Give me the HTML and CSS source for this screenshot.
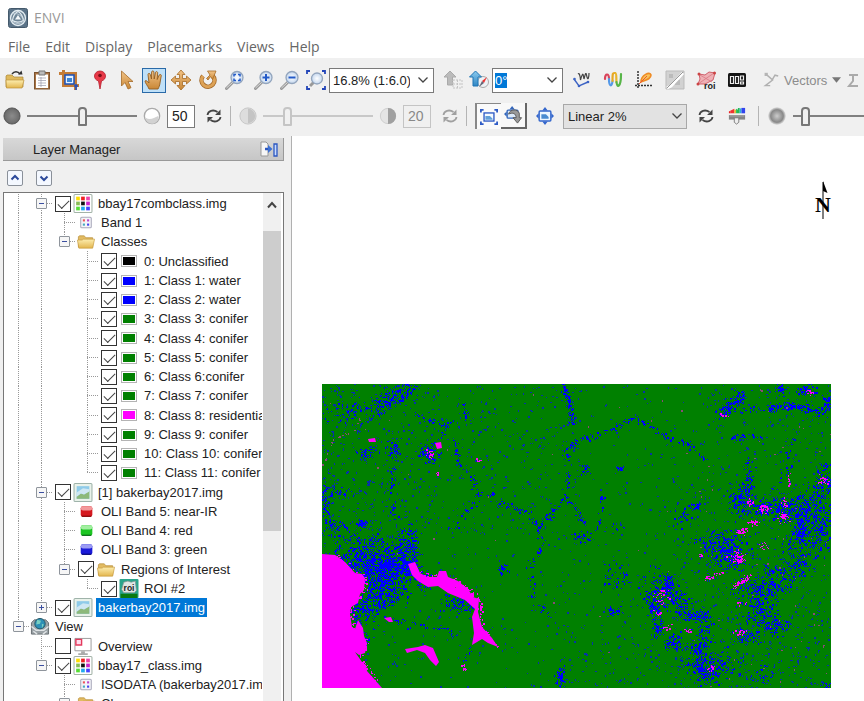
FILE: index.html
```html
<!DOCTYPE html>
<html lang="en">
<head>
  <meta charset="UTF-8" />
  <meta name="viewport" content="width=device-width, initial-scale=1.0"/>
  <title>ENVI</title>
  <link rel="stylesheet" href="styles.css">
</head>
<body>

<svg class="defs" aria-hidden="true">
  <defs>
    <linearGradient id="gold" x1="0" y1="0" x2="0" y2="1">
      <stop offset="0" stop-color="#fdeeb0"/><stop offset="1" stop-color="#e3b64e"/>
    </linearGradient>
    <linearGradient id="tan" x1="0" y1="0" x2="0" y2="1">
      <stop offset="0" stop-color="#f2c488"/><stop offset="1" stop-color="#c98736"/>
    </linearGradient>
    <linearGradient id="sky" x1="0" y1="0" x2="0" y2="1">
      <stop offset="0" stop-color="#8ccbee"/><stop offset="1" stop-color="#2f86c4"/>
    </linearGradient>
    <radialGradient id="glass"><stop offset="0" stop-color="#fff"/><stop offset="1" stop-color="#c3d6ee"/></radialGradient>
    <radialGradient id="ring"><stop offset="0" stop-color="#ccc"/><stop offset=".35" stop-color="#aaa"/><stop offset=".7" stop-color="#888"/><stop offset="1" stop-color="#e8e8e8"/></radialGradient>
    <radialGradient id="dark"><stop offset="0" stop-color="#8c8c8c"/><stop offset=".8" stop-color="#707070"/><stop offset="1" stop-color="#606060"/></radialGradient>
  </defs>
  <symbol id="folder" viewBox="0 0 20 20">
    <path d="M2 16V5l1-1h5l2 2h7v10z" fill="#e2bb62" stroke="#b48a34" stroke-width=".7"/>
    <path d="M1 8.500h5l1-1h12l-2 9.500H2.500z" fill="url(#gold)" stroke="#c59a3e" stroke-width=".7"/>
  </symbol>
  <symbol id="open" viewBox="0 0 20 20">
    <path d="M1 17V6l1-1h5l2 2h9v10z" fill="#dfb95c" stroke="#a98637" stroke-width=".7"/>
    <path d="M1 10h18l-2 8H1.500z" fill="url(#gold)" stroke="#bd943c" stroke-width=".7"/>
    <path d="M7 4c2-3 6-3 8 0" fill="none" stroke="#333" stroke-width="1.400"/><path d="M13 4.500h4.500l-1-4z" fill="#333"/>
  </symbol>
  <symbol id="classimg" viewBox="0 0 18 18">
    <rect x=".5" y=".5" width="17" height="17" rx="1" fill="#fff" stroke="#a3b3a8"/>
    <path d="M2.500 2.500h3.500v3.500H2.500z" fill="#fd0"/><path d="M7.200 2.500h3.500v3.500H7.200z" fill="#e22"/><path d="M12 2.500h3.500v3.500H12z" fill="#e4a"/>
    <path d="M2.500 7.200h3.500v3.500H2.500z" fill="#8b5"/><path d="M7.200 7.200h3.500v3.500H7.200z" fill="#111"/><path d="M12 7.200h3.500v3.500H12z" fill="#c2c"/>
    <path d="M2.500 12h3.500v3.500H2.500z" fill="#5d3"/><path d="M7.200 12h3.500v3.500H7.200z" fill="#2ae"/><path d="M12 12h3.500v3.500H12z" fill="#44f"/>
  </symbol>
  <symbol id="band" viewBox="0 0 18 18">
    <rect x="4" y="4" width="10" height="10" rx="1" fill="#f4f4fa" stroke="#aab"/>
    <path d="M6 6h2v2H6z" fill="#e55"/><path d="M10 6h2v2h-2z" fill="#b4c"/><path d="M6 10h2v2H6z" fill="#4ab"/><path d="M10 10h2v2h-2z" fill="#44e"/>
  </symbol>
  <symbol id="raster" viewBox="0 0 18 18">
    <rect x=".5" y=".5" width="17" height="17" rx="1" fill="#e9f2ea" stroke="#9fb3aa"/>
    <path d="M3 3h12v12H3z" fill="#8fcbe9"/><path d="M3 13l4-3 3 1 5-4v8H3z" fill="#8db97a"/><path d="M3 9l6-4 6 1v2l-5 3-3-1-4 3z" fill="#cfe7f3"/>
  </symbol>
  <symbol id="red" viewBox="0 0 18 18"><rect x="4" y="4" width="11" height="10" rx="2" fill="#d51a20"/><rect x="4" y="4" width="11" height="4" rx="2" fill="#f3999b"/><path d="M5 13.500h9" stroke="#700"/></symbol>
  <symbol id="green" viewBox="0 0 18 18"><rect x="4" y="4" width="11" height="10" rx="2" fill="#1cc522"/><rect x="4" y="4" width="11" height="4" rx="2" fill="#a2efa1"/><path d="M5 13.500h9" stroke="#051"/></symbol>
  <symbol id="blue" viewBox="0 0 18 18"><rect x="4" y="4" width="11" height="10" rx="2" fill="#1a1ad8"/><rect x="4" y="4" width="11" height="4" rx="2" fill="#9c9cf3"/><path d="M5 13.500h9" stroke="#006"/></symbol>
  <symbol id="roi" viewBox="0 0 18 18">
    <rect width="18" height="18" rx="1" fill="#2aa58b"/><path d="M1 14h16v4H1z" fill="#087a10"/>
    <path d="M4 3l4-1 3 1 4-1 1 9-2 2H4l-2-3z" fill="#dfe6e4" stroke="#7f9691" stroke-width=".7"/>
    <text x="9" y="11" text-anchor="middle" font-size="8" font-weight="bold" font-family="Liberation Sans, sans-serif" fill="#222">roi</text>
  </symbol>
  <symbol id="view" viewBox="0 0 20 20">
    <path d="M1 6l3-3h12l3 3v12H1z" fill="#9aa2a6" stroke="#666e72"/>
    <path d="M1 10l5 4h8l5-4M3 15l4 3M17 15l-4 3" stroke="#e0e4e6" stroke-width="1.500" fill="none"/>
    <circle cx="10" cy="7" r="5.500" fill="#2d8fb5" stroke="#256"/><path d="M7 3l4 1-1 3-4 1zM12 7l2 1-2 4z" fill="#79cfc0"/>
  </symbol>
  <symbol id="overview" viewBox="0 0 20 20">
    <path d="M1.500 1.500h17v13h-17z" fill="#fff" stroke="#999"/><path d="M2.500 2.500h6v6h-6z" fill="#fde" stroke="#e33a5c" stroke-width="1.500"/>
    <path d="M8 15h4v2H8zM5 17h10v2H5z" fill="#aaa"/>
  </symbol>
  <symbol id="refresh" viewBox="0 0 18 18">
    <path d="M2.500 8C3 4 8 2 12.500 5M15.500 10c-.5 4-5.500 6-10 3" fill="none" stroke="currentColor" stroke-width="1.800"/>
    <path d="M15.500 2.500v5.500H10zM2.500 15.500V10h5.500z" fill="currentColor"/>
  </symbol>
  <symbol id="chev" viewBox="0 0 12 12"><path d="M1.500 3.500L6 8l4.500-4.500" fill="none" stroke="#444" stroke-width="1.300"/></symbol>
  <symbol id="lens" viewBox="0 0 20 20">
    <path d="M8 12l-6.500 6.500" stroke="#999" stroke-width="3" stroke-linecap="round"/><path d="M8 12l-6.500 6" stroke="#ddd"/>
    <circle cx="12" cy="7.500" r="6" fill="url(#glass)" stroke="#93a5bd" stroke-width="1.300"/>
  </symbol>
</svg>

<header class="titlebar">
  <svg width="20" height="20" viewBox="0 0 20 20" aria-hidden="true">
    <rect x=".5" y=".5" width="19" height="19" rx="2" fill="#5b7388" stroke="#44596b"/>
    <circle cx="10" cy="10" r="7.500" fill="#6e8597" stroke="#e4edf2" stroke-width="1.300"/>
    <path d="M10 3.500c3 1 5 6 5.500 9-4 2-8 2-11 0C5 9 7 5 10 3.500z" fill="none" stroke="#e4edf2" stroke-width="1.200"/>
    <path d="M10 7l3 4.500H7z" fill="#f4f8fa"/><path d="M4 6c3-1 9-1 12 7M3 12c3 4 9 5 13 1" fill="none" stroke="#c8d6df" stroke-width=".8"/>
  </svg>
  <span>ENVI</span>
</header>

<nav class="menubar">
  <a href="#">File</a>
  <a href="#">Edit</a>
  <a href="#">Display</a>
  <a href="#">Placemarks</a>
  <a href="#">Views</a>
  <a href="#">Help</a>
</nav>

<div class="toolbars">
  <div class="toolbar">
    <div class="tools">
      <button aria-label="Open"><svg><use href="#open"/></svg></button>
      <button aria-label="Data Manager"><svg viewBox="0 0 20 20">
        <rect x="2.500" y="2.500" width="15" height="16.500" fill="#a87445" stroke="#7d5430"/><path d="M4 4.500h12v13.500H4z" fill="#fff"/>
        <path d="M7 1h6v4H7z" fill="#bbb" stroke="#777"/><path d="M6 8h8M6 10.500h8M6 13h8M6 15.500h8M9 7v10" stroke="#99a" stroke-width=".7"/>
      </svg></button>
      <button aria-label="Crop"><svg viewBox="0 0 20 20">
        <path d="M0 3.500h16.500V20M4.500 0v15.500H20" fill="none" stroke="#c47b35" stroke-width="3"/><path d="M6 5h9v9H6z" fill="#e6f1fd" stroke="#1b52b8" stroke-width="1.500"/>
        <path d="M8 8h5v4H8z" fill="#3e86d4"/><path d="M15 16h4M17 14v6" stroke="#1d50c4" stroke-width="1.500"/>
      </svg></button>
    </div>
    <div class="tools">
      <button aria-label="Placemark"><svg viewBox="0 0 20 20">
        <path d="M10 19L8.500 11C5.500 10 4.500 8 4.500 6a5.500 5 0 0 1 11 0c0 2-1 4-4 5z" fill="#e83a48" stroke="#b51e2d" stroke-width=".8"/><circle cx="10" cy="5.500" r="1.800" fill="#7b0d18"/>
      </svg></button>
      <button aria-label="Select"><svg viewBox="0 0 20 20">
        <path d="M4.500 1v15l3.500-3.500 3 6.500 3-1.300-3-6.200h5z" fill="url(#tan)" stroke="#a46b28" stroke-width=".8"/>
      </svg></button>
      <button class="active" aria-label="Pan"><svg viewBox="0 0 20 20">
        <path d="M5 19c-1-3-4-6-4-8 1-1 2 0 4 2L4 4.500c0-1.500 2-1.500 2.300 0L7.500 9 7.600 2c.2-1.500 2.200-1.500 2.300 0L10.200 9l1.300-6.500c.3-1.500 2.300-1 2.200.5L13.200 9.500l2-4.500c.8-1.200 2.500-.5 2 1L16 13c-.4 3-1 4-2 6z" fill="url(#tan)" stroke="#935d20" stroke-width=".9"/>
      </svg></button>
      <button aria-label="Fly"><svg viewBox="0 0 20 20">
        <path d="M10 0l4 4.500h-2.500v4h4V6L20 10l-4.500 4v-2.500h-4v4H14L10 20l-4-4.500h2.500v-4h-4V14L0 10l4.500-4v2.500h4v-4H6z" fill="url(#tan)" stroke="#a66b26" stroke-width=".8"/>
      </svg></button>
      <button aria-label="Rotate"><svg viewBox="0 0 20 20">
        <path d="M14.500 5.500A6.500 6.500 0 1 1 5 6" fill="none" stroke="#9f6424" stroke-width="4.500"/><path d="M14.500 5.500A6.500 6.500 0 1 1 5 6" fill="none" stroke="#dda256" stroke-width="3"/>
        <path d="M9.500 1H18l-3.500 8.500-2-3L10 10 8.500 8.500 12 5z" fill="url(#tan)" stroke="#a66b26" stroke-width=".8"/>
      </svg></button>
      <button aria-label="Zoom to box"><svg viewBox="0 0 20 20"><use href="#lens"/><path d="M9 6.500V4.500h2M13 4.500h2v2M15 8.500v2h-2M11 10.500H9v-2" stroke="#235ac8" stroke-width="1.500" fill="none"/></svg></button>
    </div>
    <div class="tools tight">
      <button aria-label="Zoom in"><svg viewBox="0 0 20 20"><use href="#lens"/><path d="M8.500 7.500h7M12 4v7" stroke="#235ac8" stroke-width="2"/></svg></button>
      <button aria-label="Zoom out"><svg viewBox="0 0 20 20"><use href="#lens"/><path d="M8.500 7.500h7" stroke="#235ac8" stroke-width="2"/></svg></button>
      <button aria-label="Zoom to full extent"><svg viewBox="0 0 20 20"><path d="M8 12l-4 4" stroke="#999" stroke-width="3"/><circle cx="11" cy="8.500" r="5.500" fill="url(#glass)" stroke="#93a5bd" stroke-width="1.300"/><path d="M1 4V1h3M16 1h3v3M19 16v3h-3M4 19H1v-3" stroke="#2345b8" stroke-width="1.800" fill="none"/></svg></button>
    </div>
    <div class="combo zoomlevel">
      <input type="text" value="16.8% (1:6.0)" aria-label="Zoom level">
      <button aria-label="Show zoom levels"><svg><use href="#chev"/></svg></button>
    </div>
    <div class="tools tight rot">
      <button disabled aria-label="Rotate to north"><svg viewBox="0 0 20 20"><path d="M7 1l6 6h-3.500v8h-5V7H1z" fill="#bbb" stroke="#aaa"/><path d="M10 10h9v8h-9zM10 14h9M14.500 10v8" fill="none" stroke="#c4c4c4" stroke-dasharray="2 1"/></svg></button>
      <button aria-label="North up"><svg viewBox="0 0 20 20"><circle cx="14" cy="12" r="5.500" fill="#eef2f5" stroke="#aaa"/><path d="M18 7l-3 6-2-2z" fill="#e33"/><path d="M10 17l5-4-2-2z" fill="#667"/><path d="M6.500 1l6 6H9v9H4V7H.5z" fill="url(#sky)" stroke="#1e74b4"/></svg></button>
    </div>
    <div class="combo angle">
      <input type="text" value="0°" aria-label="Rotation"><button aria-label="Show rotations"><svg><use href="#chev"/></svg></button>
    </div>
    <div class="tools wide">
      <button aria-label="Spectral profile"><svg viewBox="0 0 20 20"><path d="M2 9l5 7 9-4" fill="none" stroke="#3c63c4" stroke-width="1.400"/><circle cx="2.500" cy="9" r="1.300" fill="#3c63c4"/><circle cx="7" cy="16" r="1.300" fill="#3c63c4"/><circle cx="16" cy="12" r="1.300" fill="#3c63c4"/><path d="M6 4c1-1 2 0 2.500 6C11 1 11 4 12 9c2-8 2-6 3-2s2 0 2-4" fill="none" stroke="#444" stroke-width="1.200"/></svg></button>
      <button aria-label="Arbitrary profile"><svg viewBox="0 0 20 20" fill="none" stroke-width="2.200" stroke-linecap="round"><path d="M2 9c0-6 4-6 4 0" stroke="#d9435b"/><path d="M6 9c0 8 3 8 3.500 2" stroke="#5599e8"/><path d="M9.500 11C9.500 2 10 3 12 3" stroke="#e6a824"/><path d="M12 3c2 0 1 5 1.500 9" stroke="#e8b52d"/><path d="M13.500 12c.5 6 4.500 6 4.500-8" stroke="#57b548"/></svg></button>
      <button aria-label="Scatter plot"><svg viewBox="0 0 20 20"><path d="M4 1v18M1 15.500h18" stroke="#333" stroke-width="1.500" stroke-dasharray="2 1"/><path d="M7 12c0-7 9-11 10-7 0 4-5 5-10 7z" fill="#f7c35b" stroke="#ef8b24" stroke-width="1.600"/><path d="M5 14l8-8" stroke="#e53"/></svg></button>
      <button disabled aria-label="Series manager"><svg viewBox="0 0 20 20"><path d="M1 1h18v18H1z" fill="#d2d2d2" stroke="#bbb"/><path d="M4 4h4v4H4zM10 10h5v5h-5z" fill="#bbb"/><path d="M2 18l4-2L18 3" fill="none" stroke="#fff" stroke-width="3"/><path d="M2 18L18 2" stroke="#999"/></svg></button>
      <button aria-label="Region of interest"><svg viewBox="0 0 20 20"><path d="M3 4l6 1 4-3 6 1-2 7-8 4H2l2-5z" fill="#eeb0b5" stroke="#d0606c"/><path d="M2 14L18 3M4 5l12 7" stroke="#d97883" stroke-width=".8"/><g fill="#c44"><circle cx="3" cy="4" r="1.500"/><circle cx="18.500" cy="3" r="1.500"/><circle cx="2" cy="14" r="1.500"/></g><text x="8" y="19" font-size="9" font-weight="bold" font-family="Liberation Sans, sans-serif" fill="#222">roi</text></svg></button>
      <button aria-label="Cursor value"><svg viewBox="0 0 20 20"><rect x="1" y="3" width="18" height="14" rx="1.500" fill="#151515"/><path d="M3.500 6.500h3v7h-3zM8.500 6.500h3v7h-3zM13.500 6h3v4h-3zM13.500 12h3v2h-3z" stroke="#eee" stroke-width="1.200" fill="none"/></svg></button>
    </div>
    <button class="vectors" disabled><svg viewBox="0 0 20 20"><path d="M4 3l8 7-9 7h6M12 9l3-5 4 1" fill="none" stroke="#b0b0b0" stroke-width="1.800"/><path d="M2 1h4v4H2z" fill="#b5b5b5"/></svg>Vectors<svg class="caret" viewBox="0 0 10 6"><path d="M0 0h10L5 6z" fill="#777"/></svg></button>
    <div class="tools"><button disabled aria-label="Annotations"><svg viewBox="0 0 20 20"><path d="M3 5h9M7 5v6l-4 5h9" stroke="#aaa" stroke-width="2" fill="none"/></svg></button></div>
  </div>

  <div class="toolbar">
    <svg class="ball" viewBox="0 0 20 20"><circle cx="10" cy="10" r="9" fill="url(#dark)" stroke="#555"/></svg>
    <input type="range" value="50" aria-label="Brightness">
    <svg class="ball" viewBox="0 0 20 20"><circle cx="10" cy="10" r="8.500" fill="#fff" stroke="#aaa" stroke-width="1.500"/><path d="M3 12c5 3 9 0 14-2a7 7 0 0 1-14 3z" fill="#d2d2d2"/></svg>
    <input type="text" class="num" value="50" aria-label="Brightness value">
    <button class="icon" aria-label="Reset brightness"><svg><use href="#refresh"/></svg></button>
    <span class="sep"></span>
    <svg class="ball" viewBox="0 0 20 20"><circle cx="10" cy="10" r="9" fill="#ddd" stroke="#c4c4c4"/><path d="M10 2a8 8 0 0 1 0 16z" fill="#c4c4c4"/></svg>
    <input type="range" value="20" disabled aria-label="Contrast">
    <svg class="ball" viewBox="0 0 20 20"><circle cx="10" cy="10" r="8.500" fill="#e4e4e4" stroke="#ccc"/><path d="M10 1a9 9 0 0 1 0 18z" fill="#a0a0a0"/></svg>
    <input type="text" class="num" value="20" disabled aria-label="Contrast value">
    <button class="icon" disabled aria-label="Reset contrast"><svg><use href="#refresh"/></svg></button>
    <span class="sep"></span>
    <div class="stretch">
      <button class="pressed" aria-label="Stretch on view extent"><svg viewBox="0 0 20 20"><path d="M1 5V2h3M16 2h3v3M19 15v3h-3M4 18H1v-3" stroke="#2e5bc6" stroke-width="2" fill="none"/><rect x="4.500" y="5.500" width="11" height="9" fill="#f4faff" stroke="#2e5bc6" stroke-width="1.500"/><path d="M6 9h5l3 3v1H6z" fill="#62a0d8"/></svg></button>
      <button class="raised" aria-label="Stretch on full extent"><svg viewBox="0 0 20 20"><path d="M9 0l3 4H6zM0 9l3-3v6z" fill="#36b"/><rect x="3.500" y="4.500" width="12" height="9" rx="1" fill="#dceafa" stroke="#36b" stroke-width="1.500"/><path d="M5 9C7 3 15 3 17 8v5h2.500L15 19l-5-6h3.500c0-5-4-6-8.500-4z" fill="#999" stroke="#555"/></svg></button>
      <button aria-label="Update stretch"><svg viewBox="0 0 20 20"><path d="M10 0l3 4H7zM10 20l3-4H7zM0 10l3-3v6zM20 10l-3-3v6z" fill="#36c"/><rect x="3.500" y="4.500" width="13" height="11" rx="1" fill="#edf6ff" stroke="#36c" stroke-width="1.600"/><path d="M6 8h5l3 3v2H6z" fill="#4a8bd0"/></svg></button>
    </div>
    <div class="selectwrap">
      <select aria-label="Stretch type"><option>Linear 2%</option></select>
      <svg><use href="#chev"/></svg>
    </div>
    <button class="icon" aria-label="Reset stretch"><svg><use href="#refresh"/></svg></button>
    <button class="icon hist" aria-label="Histogram stretch"><svg viewBox="0 0 20 20"><path d="M1 7V5l2-1v3z" fill="#e22"/><path d="M3 7V4l4-2v5z" fill="#e33"/><path d="M7 7V3h2v4z" fill="#db3"/><path d="M9 7V2l2 1v4zM11 7V1h2v6z" fill="#2b5"/><path d="M13 7V2l2-1v6z" fill="#3ad"/><path d="M15 7V1h4v6z" fill="#34e"/><path d="M1 9h18v5H1z" fill="#858585"/><path d="M2 10h16" stroke="#aaa"/><path d="M7 12h5v5l-2.500 2L7 17z" fill="#eee" stroke="#777"/></svg></button>
    <span class="sep"></span>
    <svg class="ball last" viewBox="0 0 20 20"><circle cx="10" cy="10" r="10" fill="url(#ring)"/></svg>
    <input type="range" class="sharpen" value="8" aria-label="Sharpen">
  </div>
</div>

<main class="workspace">
  <aside class="layers">
    <div class="layers-head">
      <h1>Layer Manager</h1>
      <button aria-label="Collapse panel"><svg viewBox="0 0 18 16"><path d="M1 1h5l2 2v12H1z" fill="#f6f6f6" stroke="#999"/><path d="M5 8h5" stroke="#2c57c0" stroke-width="2.500"/><path d="M8 4l4.500 4L8 12z" fill="#3b70d4"/><path d="M14 3h3v12h-3z" fill="#c9dcff" stroke="#2c57c0" stroke-width="1.300"/></svg></button>
    </div>
    <div class="layers-tools">
      <button aria-label="Move up"><svg viewBox="0 0 12 12"><path d="M2.500 7.500L6 4l3.500 3.500" fill="none" stroke="#2b4a9c" stroke-width="2"/></svg></button>
      <button aria-label="Move down"><svg viewBox="0 0 12 12"><path d="M2.500 4.500L6 8l3.500-3.500" fill="none" stroke="#2b4a9c" stroke-width="2"/></svg></button>
    </div>
    <div class="treebox">
      <ul class="tree" id="tree"></ul>
      <div class="scroll">
        <button aria-label="Scroll up"><svg viewBox="0 0 12 12"><path d="M2 8.500L6 4l4 4.500" fill="none" stroke="#444" stroke-width="2"/></svg></button>
        <div class="thumb"></div>
      </div>
    </div>
  </aside>

  <section class="viewport">
    <svg class="north" viewBox="0 0 20 40" aria-label="North arrow">
      <path d="M10 1v37" stroke="#555" stroke-width="1.500"/>
      <path d="M10 0l4.500 12L10 10z" fill="#000"/>
      <text x="10" y="31" text-anchor="middle">N</text>
    </svg>
    <canvas id="map" width="509" height="304"></canvas>
  </section>
</main>

<script src="script.js"></script>
</body>
</html>
```

FILE: styles.css
```css
* {
  box-sizing: border-box;
}
body {
  margin: 0;
  height: 100vh;
  display: flex;
  flex-direction: column;
  overflow: hidden;
  background-color: #fff;
  font-family: "Liberation Sans", Arial, sans-serif;
  font-size: 13px;
  color: #222;
}
button {
  padding: 0;
  border: none;
  background: none;
  font: inherit;
  display: flex;
  align-items: center;
  justify-content: center;
}
input, select {
  margin: 0;
  font: inherit;
  color: inherit;
}
.defs {
  position: absolute;
  width: 0;
  height: 0;
}

/* title and menu */
.titlebar {
  display: flex;
  align-items: center;
  gap: 6px;
  height: 35px;
  padding: 0 8px;
  font-family: "Open Sans", sans-serif;
  font-size: 14px;
  color: #999;
}
.menubar {
  display: flex;
  gap: 15px;
  height: 23px;
  padding: 0 8px;
  align-items: center;
  font-family: "Open Sans", sans-serif;
  font-size: 14px;
}
.menubar a {
  color: #666;
  text-decoration: none;
}

/* toolbars */
.toolbars {
  background-color: #f0f0f0;
  height: 78px;
  padding-top: 4px;
  overflow: hidden;
}
.toolbar {
  display: flex;
  align-items: center;
  height: 36px;
}
.toolbar > * {
  flex-shrink: 0;
}
.tools {
  display: flex;
  gap: 3px;
  padding-left: 3px;
}
.tools + .tools {
  padding-left: 7px;
}
.tools button {
  width: 24px;
  height: 25px;
}
.tools svg {
  width: 20px;
  height: 20px;
}
.tools .active {
  background-color: #bfe0f8;
  border: 1px solid #2a6aa8;
}
.tools.tight {
  gap: 2px;
  padding-left: 5px;
}
.tools.rot {
  padding-left: 7px;
}
.wide {
  gap: 7px;
  padding-left: 7px;
}
.combo {
  display: flex;
  height: 25px;
  margin-left: 1px;
  border: 1px solid #7a7a7a;
  background-color: #fff;
}
.combo input {
  flex: 1;
  min-width: 0;
  padding: 0 3px;
  border: none;
  outline: none;
  background: none;
}
.combo button {
  width: 20px;
}
.combo svg, .selectwrap svg {
  width: 12px;
  height: 12px;
}
.zoomlevel {
  width: 105px;
}
.angle {
  width: 71px;
}
.angle input {
  padding: 0 2px;
}
::selection {
  background-color: #0078d7;
  color: #fff;
}
.vectors {
  gap: 5px;
  margin-left: 14px;
  color: #8c8c8c;
}
.vectors svg {
  width: 16px;
  height: 18px;
}
.vectors .caret {
  width: 9px;
  height: 6px;
}
.ball {
  width: 18px;
  height: 18px;
  margin: 0 3px;
}
.ball.last {
  margin: 0 4px;
}
input[type=range] {
  appearance: none;
  width: 110px;
  height: 20px;
  margin: 0 3px;
  background: linear-gradient(#808080, #808080) center / 100% 2px no-repeat;
}
input[type=range]::-webkit-slider-thumb {
  appearance: none;
  width: 9px;
  height: 19px;
  border: 2px solid #777;
  border-radius: 4px 4px 1px 1px;
  background-color: #f0f0f0;
}
input[type=range]:disabled {
  opacity: .35;
}
.num {
  width: 28px;
  height: 23px;
  margin: 0 9px 0 3px;
  padding: 0 4px;
  border: 1px solid #7a7a7a;
  background-color: #fff;
  font-size: 14px;
}
.num:disabled {
  background-color: #f0f0f0;
  border-color: #c4c4c4;
  color: #888;
}
.icon {
  width: 20px;
  color: #444;
}
.icon svg {
  width: 18px;
  height: 18px;
}
.icon:disabled {
  color: #a0a0a0;
}
.sep {
  width: 1px;
  height: 20px;
  margin: 0 5px 0 6px;
  background-color: #b4b4b4;
}
.stretch {
  display: flex;
  padding-left: 3px;
}
.stretch button {
  width: 26px;
  height: 26px;
}
.stretch button:last-child {
  width: 36px;
}
.stretch svg {
  width: 20px;
  height: 18px;
}
.stretch .pressed {
  background-color: #fafafa;
  border-left: 2px solid #888;
  border-top: 1px solid #888;
}
.stretch .raised {
  background-color: #f8f8f8;
  border-right: 2px solid #666;
  border-bottom: 2px solid #666;
}
.selectwrap {
  display: grid;
  width: 124px;
  height: 25px;
  margin-right: 9px;
}
.selectwrap > * {
  grid-area: 1 / 1;
}
.selectwrap select {
  appearance: none;
  padding: 0 4px;
  border: 1px solid #a8a8a8;
  border-radius: 0;
  background-color: #e2e2e2;
}
.selectwrap svg {
  place-self: center end;
  margin-right: 4px;
  pointer-events: none;
}
.hist {
  width: 22px;
  margin: 0 4px 0 10px;
}
.hist svg {
  width: 22px;
}

/* layer manager */
.workspace {
  flex: 1;
  min-height: 0;
  display: flex;
}
.layers {
  width: 292px;
  flex-shrink: 0;
  display: flex;
  flex-direction: column;
  padding: 2px 7px 0 3px;
  border-right: 1px solid #b0b0b0;
  background-color: #f0f0f0;
}
.layers-head {
  display: flex;
  align-items: center;
  justify-content: space-between;
  height: 23px;
  padding: 0 5px 0 30px;
  border-right: 1px solid #999;
  border-bottom: 1px solid #999;
  background: linear-gradient(#d8d8d8, #c6c6c6);
}
.layers-head h1 {
  margin: 0;
  font-size: 13px;
  font-weight: normal;
}
.layers-head svg {
  width: 18px;
  height: 16px;
}
.layers-tools {
  display: flex;
  gap: 13px;
  padding: 9px 4px 6px;
}
.layers-tools button {
  width: 16px;
  height: 16px;
  border: 1px solid #8a9099;
  border-radius: 2px;
  background-color: #f4f8ff;
}
.layers-tools svg {
  width: 12px;
  height: 12px;
}
.treebox {
  flex: 1;
  min-height: 0;
  display: flex;
  padding-right: 2px;
  border: 1px solid #777;
  border-bottom: none;
  background-color: #fff;
}
.tree {
  flex: 1;
  min-width: 0;
  margin: 0 1px 0 0;
  padding: 1px 0 0 3px;
  list-style: none;
  overflow: hidden;
}
.row {
  display: flex;
  align-items: center;
  height: 19px;
  white-space: nowrap;
}
.row:nth-child(4n) {
  height: 20px;
}
.row label, .row .plain {
  display: flex;
  align-items: center;
}
.row svg {
  flex-shrink: 0;
  width: 20px;
  height: 19px;
  margin-right: 5px;
}
.row .name {
  line-height: 19px;
}
.selected .name {
  margin-left: -2px;
  padding: 0 2px;
  background-color: #0078d7;
  color: #fff;
}
.row input {
  appearance: none;
  flex-shrink: 0;
  width: 16px;
  height: 16px;
  margin: 0 2px;
  border: 1px solid #333;
  background-color: #fff;
}
.row input:checked::before {
  content: "";
  display: block;
  width: 10px;
  height: 5px;
  margin: 3px 2px;
  border: solid #444;
  border-width: 0 0 1px 1px;
  transform: rotate(-45deg);
}
.swatch {
  flex-shrink: 0;
  width: 16px;
  height: 12px;
  margin: 0 7px 0 2px;
  border: 1px solid #b4b4b4;
  box-shadow: inset 0 0 0 1px #fff;
}

/* dotted guides, one cell per tree level */
.guide {
  --down: repeating-linear-gradient(#999 0 1px, transparent 1px 2px);
  --across: repeating-linear-gradient(90deg, #999 0 1px, transparent 1px 2px);
  flex-shrink: 0;
  display: flex;
  align-items: center;
  justify-content: center;
  width: 23px;
  height: 100%;
  background-repeat: no-repeat;
  background-position: 11px 0, 11px 50%;
}
.line {
  background-image: var(--down);
  background-size: 1px 100%;
}
.tee, .node {
  background-image: var(--down), var(--across);
  background-size: 1px 100%, 12px 1px;
}
.end, .lastnode {
  background-image: var(--down), var(--across);
  background-size: 1px 50%, 12px 1px;
}
.guide button {
  width: 11px;
  height: 11px;
  border: 1px solid #8f959c;
  border-radius: 1px;
  background: linear-gradient(#3b4fa0, #3b4fa0) center / 5px 1px no-repeat #f6f6f6;
}
.guide .plus {
  background: linear-gradient(#3b4fa0, #3b4fa0) center / 5px 1px no-repeat, linear-gradient(#3b4fa0, #3b4fa0) center / 1px 5px no-repeat #f6f6f6;
}
.scroll {
  width: 18px;
  display: flex;
  flex-direction: column;
  background-color: #f0f0f0;
}
.scroll button {
  height: 38px;
  padding-bottom: 14px;
}
.scroll svg {
  width: 12px;
  height: 12px;
}
.scroll .thumb {
  height: 59%;
  background-color: #cdcdcd;
}

/* image window */
.viewport {
  flex: 1;
  min-width: 0;
  display: flex;
  flex-direction: column;
  justify-content: space-between;
  padding: 45px 33px 13px 30px;
  background-color: #fff;
}
.north {
  width: 20px;
  height: 40px;
  align-self: flex-end;
  margin-right: -2px;
}
.north text {
  font-family: "Liberation Serif", serif;
  font-size: 22px;
  font-weight: bold;
}
#map {
  width: 100%;
}
```

FILE: script.js
```js
// guides: "|" line, "t" branch, "l" last branch, "b" node, "e" last node, "." empty
const layers = [
  { g: "|b", check: true, icon: "classimg", name: "bbay17combclass.img" },
  { g: "||t", icon: "band", name: "Band 1" },
  { g: "||e", icon: "folder", name: "Classes" },
  { g: "||.t", check: true, color: "#000000", name: "0: Unclassified" },
  { g: "||.t", check: true, color: "#0000ff", name: "1: Class 1: water" },
  { g: "||.t", check: true, color: "#0000ff", name: "2: Class 2: water" },
  { g: "||.t", check: true, color: "#008000", name: "3: Class 3: conifer" },
  { g: "||.t", check: true, color: "#008000", name: "4: Class 4: conifer" },
  { g: "||.t", check: true, color: "#008000", name: "5: Class 5: conifer" },
  { g: "||.t", check: true, color: "#008000", name: "6: Class 6:conifer" },
  { g: "||.t", check: true, color: "#008000", name: "7: Class 7: conifer" },
  { g: "||.t", check: true, color: "#ff00ff", name: "8: Class 8: residential" },
  { g: "||.t", check: true, color: "#008000", name: "9: Class 9: conifer" },
  { g: "||.t", check: true, color: "#008000", name: "10: Class 10: conifer" },
  { g: "||.l", check: true, color: "#008000", name: "11: Class 11: conifer" },
  { g: "|b", check: true, icon: "raster", name: "[1] bakerbay2017.img" },
  { g: "||t", icon: "red", name: "OLI Band 5: near-IR" },
  { g: "||t", icon: "green", name: "OLI Band 4: red" },
  { g: "||t", icon: "blue", name: "OLI Band 3: green" },
  { g: "||e", check: true, icon: "folder", name: "Regions of Interest" },
  { g: "||.l", check: true, icon: "roi", name: "ROI #2" },
  { g: "|e", closed: true, check: true, icon: "raster", name: "bakerbay2017.img", selected: true },
  { g: "e", icon: "view", name: "View" },
  { g: ".t", check: false, icon: "overview", name: "Overview" },
  { g: ".e", check: true, icon: "classimg", name: "bbay17_class.img" },
  { g: "..t", icon: "band", name: "ISODATA (bakerbay2017.img)" },
  { g: "..e", icon: "folder", name: "Classes" }
];

const kinds = { "|": "line", t: "tee", l: "end", b: "node", e: "lastnode", ".": "" };

document.getElementById("tree").innerHTML = layers.map(l => {
  const guides = [...l.g].map(c => {
    const button = c === "b" || c === "e"
      ? `<button class="${l.closed ? "plus" : "minus"}" aria-label="Toggle ${l.name}"></button>` : "";
    return `<span class="guide ${kinds[c]}">${button}</span>`;
  }).join("");
  const icon = l.color
    ? `<span class="swatch" style="background-color:${l.color}"></span>`
    : `<svg><use href="#${l.icon}"/></svg>`;
  const name = `<span class="name">${l.name}</span>`;
  const body = "check" in l
    ? `<label><input type="checkbox" ${l.check ? "checked" : ""}>${icon}${name}</label>`
    : `<span class="plain">${icon}${name}</span>`;
  return `<li class="row ${l.selected ? "selected" : ""}">${guides}${body}</li>`;
}).join("");

const angle = document.querySelector(".angle input");
angle.focus();
angle.select();

// classification map
const ctx = document.getElementById("map").getContext("2d");
const GREEN = "#008000", BLUE = "#0000ff", PINK = "#ff00ff";
const DIM = "#0632a8", DULL = "#8a4a78";

let seed = 2017;
function rnd() {
  seed = (seed * 1664525 + 1013904223) % 4294967296;
  return seed / 4294967296;
}
function spread() {
  return rnd() + rnd() + rnd() - 1.5;
}
function dot(x, y, color) {
  ctx.fillStyle = color;
  ctx.fillRect(Math.round(x), Math.round(y), rnd() < 0.35 ? 2 : 1, rnd() < 0.35 ? 2 : 1);
}
function scatter(x, y, w, h, n, color) {
  for (let i = 0; i < n; i++) dot(x + rnd() * w, y + rnd() * h, color);
}
function blob(x, y, rx, ry, n, color) {
  for (let i = 0; i < n; i++) dot(x + spread() * rx, y + spread() * ry, color);
}
function trail(points, width, density, color) {
  for (let i = 1; i < points.length; i++) {
    const [x1, y1] = points[i - 1], [x2, y2] = points[i];
    const n = Math.hypot(x2 - x1, y2 - y1) * density;
    for (let k = 0; k < n; k++) {
      const t = rnd();
      dot(x1 + (x2 - x1) * t + spread() * width, y1 + (y2 - y1) * t + spread() * width, color);
    }
  }
}
function area(points, color) {
  ctx.fillStyle = color;
  ctx.beginPath();
  points.forEach(([x, y]) => ctx.lineTo(x, y));
  ctx.fill();
}

ctx.fillStyle = GREEN;
ctx.fillRect(0, 0, 509, 304);

// isolated pixels
scatter(0, 0, 509, 304, 1200, DIM);
scatter(0, 0, 90, 170, 330, DIM);
scatter(90, 0, 170, 150, 250, DIM);
scatter(350, 100, 159, 204, 500, DIM);
scatter(240, 230, 269, 74, 150, DIM);
scatter(390, 0, 119, 90, 130, DIM);

// streams
[
  [[93, 31], [125, 43]], [[143, 19], [143, 39]], [[133, 54], [134, 70], [139, 83]],
  [[150, 91], [153, 108], [173, 111]], [[176, 119], [206, 128], [216, 144], [243, 114], [246, 88]],
  [[243, 114], [253, 122], [260, 138]], [[253, 56], [244, 68], [243, 78]],
  [[248, 62], [261, 54], [281, 49], [311, 34], [328, 41], [348, 56], [365, 59], [385, 78]],
  [[408, 53], [438, 51]], [[130, 36], [116, 54]]
].forEach(p => trail(p, 3, 0.75, BLUE));
[
  [[156, 114], [126, 149]], [[71, 71], [71, 138]], [[208, 176], [210, 216], [226, 229]],
  [[60, 236], [100, 240], [136, 250]], [[150, 261], [141, 280]], [[216, 144], [222, 160], [208, 176]],
  [[270, 150], [282, 125]], [[290, 143], [303, 143]], [[418, 28], [448, 23]], [[470, 50], [464, 90], [450, 104]]
].forEach(p => trail(p, 4, 0.45, BLUE));
trail([[241, 0], [246, 18], [251, 38]], 3, 2.2, BLUE);
trail([[52, 24], [68, 14], [92, 2]], 10, 4, BLUE);
trail([[0, 30], [50, 25]], 10, 1, BLUE);
trail([[420, 9], [400, 31]], 6, 4, BLUE);
trail([[448, 23], [475, 22], [498, 28]], 4, 2.6, BLUE);

// water in the marsh
blob(56, 184, 36, 18, 850, BLUE);
blob(40, 165, 38, 20, 240, BLUE);
blob(86, 166, 12, 22, 180, BLUE);
blob(60, 208, 22, 16, 260, BLUE);
blob(42, 223, 18, 16, 150, BLUE);
trail([[60, 183], [88, 184], [108, 200]], 8, 4, BLUE);
blob(136, 219, 16, 12, 100, BLUE);
trail([[30, 226], [44, 260]], 4, 1.5, BLUE);

// small patches: x, y, rx, ry, count
[
  [71, 64, 7, 9, 35], [44, 68, 12, 5, 35], [106, 69, 10, 9, 80], [3, 118, 6, 20, 60], [12, 143, 14, 8, 45],
  [40, 139, 6, 4, 40], [18, 106, 14, 6, 25], [181, 184, 5, 6, 25], [238, 293, 4, 9, 50],
  [298, 84, 3, 2, 15], [279, 114, 3, 3, 15], [373, 122, 5, 3, 22], [263, 86, 6, 6, 20],
  [458, 6, 4, 6, 25], [485, 6, 10, 6, 45], [504, 20, 4, 12, 40], [425, 95, 6, 22, 60],
  [418, 116, 12, 16, 120], [441, 123, 22, 8, 130], [465, 124, 20, 12, 120], [490, 115, 22, 16, 130],
  [502, 95, 8, 16, 80], [482, 137, 14, 20, 140], [500, 142, 12, 22, 120], [480, 158, 24, 16, 110],
  [400, 158, 28, 12, 130], [408, 172, 18, 14, 160], [475, 179, 12, 16, 80], [455, 194, 22, 14, 100],
  [434, 204, 28, 10, 130], [438, 224, 18, 20, 150], [452, 241, 14, 10, 90], [424, 252, 12, 8, 60],
  [346, 201, 5, 12, 80], [335, 208, 16, 22, 130], [331, 223, 7, 10, 50], [336, 243, 6, 9, 60],
  [351, 258, 8, 10, 70], [375, 264, 10, 6, 55], [357, 214, 10, 12, 70], [370, 231, 16, 6, 100],
  [382, 245, 10, 18, 60], [374, 278, 16, 11, 70], [384, 288, 14, 12, 130], [398, 280, 18, 14, 70],
  [291, 226, 8, 5, 30], [294, 194, 14, 16, 40], [260, 152, 8, 8, 25], [441, 290, 10, 10, 30],
  [506, 301, 8, 6, 20], [358, 132, 10, 10, 30], [478, 149, 6, 5, 40]
].forEach(([x, y, rx, ry, n]) => blob(x, y, rx, ry, n, BLUE));

// residential class
area([[0, 170], [13, 171], [23, 178], [33, 189], [40, 190], [43, 194], [42, 206], [38, 210], [36, 219], [29, 223],
  [28, 230], [30, 243], [33, 245], [36, 236], [41, 244], [42, 252], [45, 259], [43, 269], [37, 271], [33, 268],
  [40, 278], [44, 281], [45, 287], [53, 296], [60, 304], [0, 304]], PINK);
area([[86, 180], [93, 178], [98, 189], [105, 193], [115, 193], [117, 187], [124, 187], [126, 193], [136, 197],
  [146, 205], [151, 213], [157, 215], [156, 228], [160, 243], [170, 254], [176, 263], [166, 259], [160, 255],
  [150, 261], [152, 249], [150, 233], [153, 225], [143, 216], [126, 209], [116, 202], [106, 203], [96, 197],
  [90, 191]], PINK);
area([[83, 265], [96, 263], [103, 261], [111, 264], [117, 278], [114, 282], [108, 276], [103, 269], [95, 266],
  [85, 269]], PINK);
area([[62, 234], [69, 233], [71, 238], [67, 238]], PINK);
area([[46, 55], [53, 54], [54, 58], [47, 58]], PINK);
area([[113, 59], [119, 58], [120, 64], [115, 65]], PINK);

// ragged shore
trail([[13, 171], [33, 189], [43, 194], [42, 206], [28, 226], [30, 243], [45, 259], [36, 270], [53, 296]], 3, 0.8, PINK);
trail([[98, 189], [126, 193], [146, 205], [157, 215], [160, 243], [176, 263]], 2, 0.8, PINK);

[
  [108, 69, 5, 4, 20], [156, 75, 3, 2, 8], [142, 283, 3, 5, 12], [116, 89, 2, 2, 5], [401, 31, 4, 2, 12],
  [488, 8, 4, 3, 10], [427, 118, 5, 3, 16], [440, 124, 7, 4, 30], [461, 132, 6, 6, 30], [430, 138, 6, 3, 20],
  [420, 147, 6, 4, 26], [501, 96, 5, 5, 20], [466, 97, 2, 6, 12], [415, 174, 8, 7, 55], [379, 171, 3, 2, 8],
  [338, 212, 9, 8, 26], [337, 229, 5, 2, 12], [345, 243, 5, 3, 12], [365, 246, 4, 2, 12], [418, 248, 8, 3, 16],
  [389, 284, 5, 4, 14], [420, 219, 6, 2, 8], [442, 162, 6, 4, 12], [462, 120, 3, 6, 15]
].forEach(([x, y, rx, ry, n]) => blob(x, y, rx, ry, n, PINK));
trail([[412, 202], [428, 191]], 2, 2.5, PINK);
trail([[382, 195], [401, 188]], 2, 1.2, PINK);
trail([[0, 80], [12, 54], [33, 47], [38, 32]], 2, 0.3, DULL);
scatter(340, 0, 169, 304, 60, DULL);
scatter(0, 0, 340, 304, 20, DULL);
```
